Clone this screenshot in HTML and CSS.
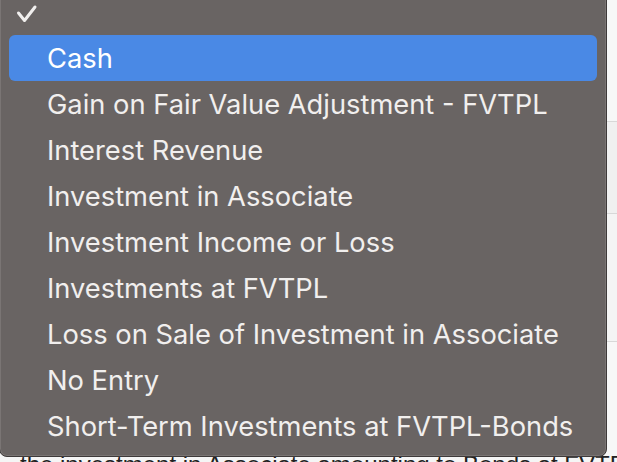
FILE: index.html
```html
<!DOCTYPE html>
<html>
<head>
<meta charset="utf-8">
<link rel="stylesheet" href="styles.css">
</head>
<body>
<div class="page">
  <div class="band b1"></div>
  <div class="band b2"></div>
  <div class="band b3"></div>
  <div class="band b4"></div>
  <div class="behind">the investment in Associate amounting to Bonds at FVTPL in k</div>
</div>
<div class="menu">
  <div class="item"><svg class="check" width="24" height="20" viewBox="0 0 24 20"><path d="M4.5 10 L10.5 17.5 L21 4" fill="none" stroke="#f1efee" stroke-width="3" stroke-linecap="round" stroke-linejoin="round"/></svg></div>
  <div class="item selected">Cash</div>
  <div class="item">Gain on Fair Value Adjustment - FVTPL</div>
  <div class="item">Interest Revenue</div>
  <div class="item">Investment in Associate</div>
  <div class="item">Investment Income or Loss</div>
  <div class="item">Investments at FVTPL</div>
  <div class="item">Loss on Sale of Investment in Associate</div>
  <div class="item">No Entry</div>
  <div class="item">Short-Term Investments at FVTPL-Bonds</div>
</div>
</body>
</html>
```
FILE: styles.css
```css
html, body {
  margin: 0;
  padding: 0;
  width: 617px;
  height: 462px;
  overflow: hidden;
  background: #f5f5f5;
  font-family: Inter, "Noto Sans", sans-serif;
}
.page {
  display: flex;
  flex-direction: column;
  height: 462px;
  overflow: hidden;
}
.band {
  flex: none;
  border-bottom: 1px solid #d8d8d8;
}
.b1 { height: 121px; background: #f7f7f7; }
.b2 { height: 91px; background: #f0f0f0; }
.b3 { height: 127px; background: #f4f4f4; }
.b4 { height: 108px; background: #f7f7f7; border-bottom: none; }
.behind {
  flex: none;
  font-family: "Liberation Sans", sans-serif;
  font-size: 24px;
  color: #222;
  white-space: nowrap;
  overflow: hidden;
  padding-left: 20px;
  margin-top: 1px;
}
.menu {
  position: absolute;
  left: -1px;
  top: -12px;
  width: 608px;
  height: 469px;
  background: #696463;
  border: 1px solid #3e3a3a;
  border-radius: 8px;
  box-sizing: border-box;
  padding: 0 9px;
  display: flex;
  flex-direction: column;
  box-shadow: inset 0 0 0 1px #7a7574;
}
.item {
  height: 46px;
  flex: none;
  display: flex;
  align-items: center;
  padding-left: 38px;
  font-size: 27.3px;
  color: #f1efee;
  white-space: nowrap;
  border-radius: 6px;
}
.item.selected {
  background: #4a89e5;
  color: #ffffff;
}
.check {
  margin-left: -33px;
  margin-top: 2px;
}
```
